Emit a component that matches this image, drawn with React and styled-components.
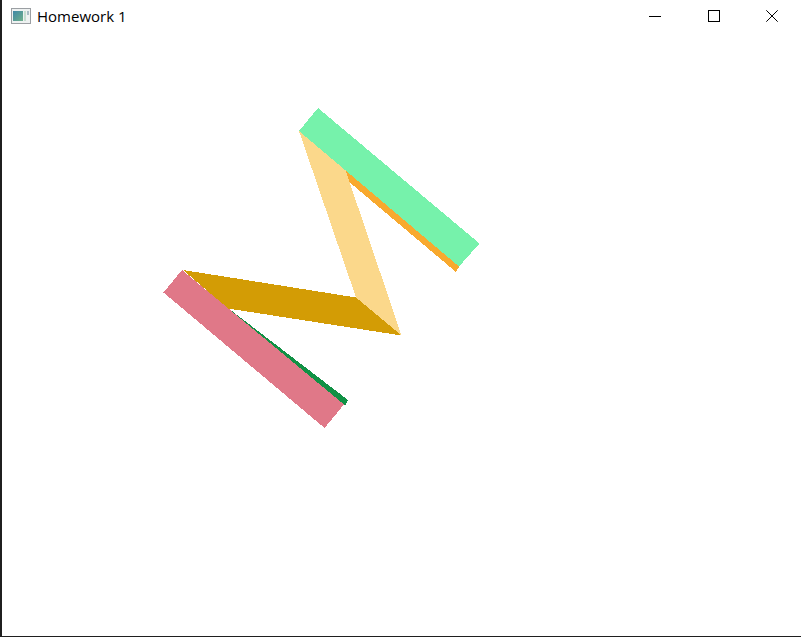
import React from 'react'
import styled, { createGlobalStyle } from 'styled-components'

const GlobalStyle = createGlobalStyle`
    html, body {
        margin: 0;
        padding: 0;
        background: #fff;
    }
    #root {
        height: 100vh;
    }
`

const Window = styled.div`
    box-sizing: border-box;
    height: 100%;
    display: flex;
    flex-direction: column;
    overflow: hidden;
    background: #fff;
    border-left: 2px solid #1f1f1f;
    border-bottom: 1px solid #1f1f1f;
`

const TitleBar = styled.header`
    height: 32px;
    flex: none;
    display: flex;
    align-items: center;
    padding-left: 9px;
`

const AppIcon = styled.svg`
    width: 20px;
    height: 16px;
    flex: none;
`

const Title = styled.span`
    margin-left: 6px;
    font-family: "Open Sans", "Liberation Sans", sans-serif;
    font-size: 15px;
    color: #000;
    line-height: 32px;
`

const Controls = styled.div`
    margin-left: auto;
    display: flex;
`

const ControlButton = styled.div`
    width: 58.33px;
    height: 32px;
    display: flex;
    align-items: center;
    justify-content: center;
`

const ControlIcon = styled.svg`
    width: 12px;
    height: 12px;
    display: block;
    shape-rendering: ${props => (props.$smooth ? 'auto' : 'crispEdges')};
`

const Canvas = styled.main`
    flex: 1;
    min-height: 0;
`

const Scene = styled.svg`
    display: block;
    width: 799px;
    height: 604px;
    shape-rendering: crispEdges;
`

const faces = [
    { color: '#f8a92e', points: '345,170 459.5,266 456,272 348,181' },
    { color: '#fbd88b', points: '299,131 345.5,170 401.5,335.5 356,297.5' },
    { color: '#119145', points: '228,308 348,400 345,405.5 225,310' },
    { color: '#d39c05', points: '183,270 356,297.5 401.5,335.5 228,308.5' },
    { color: '#76f2ab', points: '318,108 479.5,243.5 459,266.5 299,131' },
    { color: '#e07888', points: '182,270 344,404.5 324.5,428 163.5,292.5' },
]

function App() {
    return (
        <Window>
            <GlobalStyle />
            <TitleBar>
                <AppIcon viewBox="0 0 20 16">
                    <defs>
                        <linearGradient id="pane" x1="0" y1="0" x2="1" y2="1">
                            <stop offset="0" stopColor="#3f87a6" />
                            <stop offset="1" stopColor="#6fb08a" />
                        </linearGradient>
                    </defs>
                    <rect x="0.5" y="0.5" width="19" height="15" fill="#eef1f1" stroke="#9b9fa3" />
                    <rect x="2" y="3" width="10" height="10" fill="url(#pane)" />
                    <rect x="13" y="3" width="2" height="10" fill="#c5ddd0" />
                    <rect x="16" y="3" width="2" height="4" fill="#a9bcc4" />
                </AppIcon>
                <Title>Homework 1</Title>
                <Controls>
                    <ControlButton>
                        <ControlIcon viewBox="0 0 12 12">
                            <rect x="0" y="6" width="12" height="1" fill="#000" />
                        </ControlIcon>
                    </ControlButton>
                    <ControlButton>
                        <ControlIcon viewBox="0 0 12 12">
                            <rect x="0.5" y="0.5" width="11" height="11" fill="none" stroke="#000" />
                        </ControlIcon>
                    </ControlButton>
                    <ControlButton>
                        <ControlIcon viewBox="0 0 12 12" $smooth>
                            <path d="M0.3 0.3 L11.7 11.7 M11.7 0.3 L0.3 11.7" fill="none" stroke="#000" strokeWidth="1" />
                        </ControlIcon>
                    </ControlButton>
                </Controls>
            </TitleBar>
            <Canvas>
                <Scene viewBox="2 32 799 604">
                    {faces.map(face => (
                        <polygon key={face.color} points={face.points} fill={face.color} />
                    ))}
                </Scene>
            </Canvas>
        </Window>
    )
}

export default App
